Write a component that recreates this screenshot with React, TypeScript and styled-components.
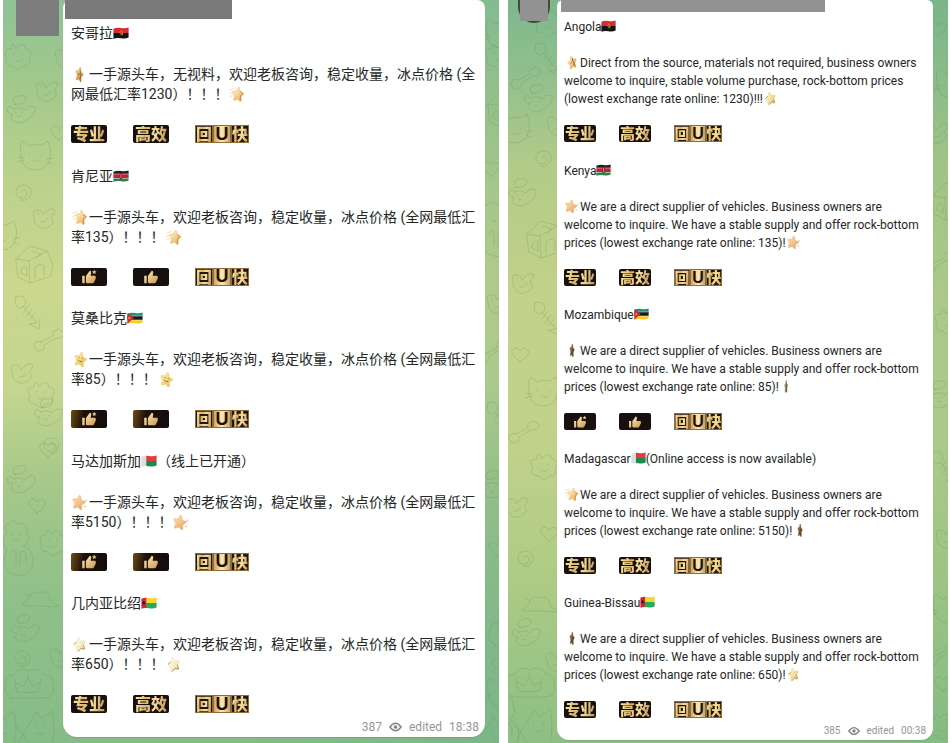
import React, { useId } from "react";
import styled, { createGlobalStyle, css } from "styled-components";

type Size = "large" | "small";

const GlobalStyle = createGlobalStyle`
  *, *::before, *::after { box-sizing: border-box; }
  body {
    margin: 0;
    background: #fff;
    color: #262626;
    font-family: Roboto, "Noto Sans CJK SC", sans-serif;
    text-spacing-trim: space-all;
  }
`;

const Page = styled.main`
  display: grid;
  grid-template-columns: 496fr 440fr;
  gap: 9px;
  min-height: 100vh;
  padding: 0 2px 0 3px;
`;

const Panel = styled.section<{ $size: Size }>`
  display: grid;
  min-width: 0;
  ${(p) =>
    p.$size === "large"
      ? css`
          grid-template-columns: 60px minmax(0, 1fr) 14px;
          background:
            linear-gradient(90deg, transparent 50%, rgba(98, 168, 134, 0.28)),
            linear-gradient(#8fc295 0%, #a3c98c 12%, #bcd28c 25%, #cbd78d 38%, #c5d68f 52%, #a8c98a 64%, #92c18a 78%, #86bb87 100%);
        `
      : css`
          grid-template-columns: 49px minmax(0, 1fr) 15px;
          background:
            linear-gradient(90deg, transparent 50%, rgba(110, 178, 128, 0.28)),
            linear-gradient(#7db78c 0%, #96c18c 12%, #b2cb89 22%, #c2d288 40%, #c0d28a 60%, #aecb85 78%, #98c385 92%, #8dbf84 100%);
        `}
`;

const Gutter = styled.div`
  position: relative;
  overflow: hidden;
`;

const Doodles = styled.svg`
  position: absolute;
  inset: 0;
  fill: none;
  stroke: #5d8b4c;
  stroke-opacity: 0.24;
  stroke-linecap: round;
  stroke-linejoin: round;
`;

const Avatar = styled.div<{ $size: Size }>`
  position: relative;
  margin-left: auto;
  ${(p) =>
    p.$size === "large"
      ? css`
          width: 43px;
          height: 36px;
          margin-right: 4px;
          background: #7c7c7c;
        `
      : css`
          width: 32px;
          height: 23px;
          margin-right: 7px;
          background: #454a3e;
          border-radius: 0 0 16px 16px;
          &::after {
            content: "";
            display: block;
            width: 28px;
            height: 21px;
            margin: 0 auto;
            background: #929292;
          }
        `}
`;

const Bubble = styled.article<{ $size: Size }>`
  display: flex;
  flex-direction: column;
  background: #fff;
  box-shadow: 0 1px 1px rgba(70, 110, 60, 0.2);
  ${(p) =>
    p.$size === "large"
      ? css`
          border-radius: 8px 8px 14px 14px;
          margin-bottom: 6px;
          padding: 0 6px 3px 8px;
        `
      : css`
          border-radius: 6px 6px 12px 12px;
          margin-bottom: 3px;
          padding: 0 7px 2px 7px;
        `}
`;

const NameBar = styled.div<{ $size: Size }>`
  ${(p) =>
    p.$size === "large"
      ? css`
          width: 41%;
          height: 19px;
          margin: 0 0 4px -6px;
          background: #7a7a7a;
        `
      : css`
          width: 73%;
          height: 12px;
          margin: 0 0 6px -3px;
          background: #929292;
        `}
`;

const Entries = styled.div<{ $size: Size }>`
  flex: 1;
  display: flex;
  flex-direction: column;
  justify-content: space-between;
  gap: 20px;
  padding-bottom: ${(p) => (p.$size === "large" ? "7px" : "6px")};
  font-size: ${(p) => (p.$size === "large" ? "14px" : "12px")};
  line-height: ${(p) => (p.$size === "large" ? "20px" : "18px")};
`;

const Country = styled.h2`
  margin: 0;
  font-size: inherit;
  font-weight: 400;
  white-space: nowrap;
`;

const Pitch = styled.p<{ $size: Size }>`
  margin: ${(p) => (p.$size === "large" ? "21px 0" : "18px 0 17px")};
`;

const FlagIcon = styled.svg<{ $size: Size }>`
  width: ${(p) => (p.$size === "large" ? "16px" : "15px")};
  height: 12px;
  vertical-align: -1px;
`;

const StarIcon = styled.svg<{ $size: Size }>`
  width: ${(p) => (p.$size === "large" ? "18px" : "16px")};
  height: 16px;
  vertical-align: -3px;
`;

const TagRow = styled.div<{ $size: Size }>`
  display: flex;
  gap: ${(p) => (p.$size === "large" ? "26px" : "23px")};
  height: ${(p) => (p.$size === "large" ? "18px" : "17px")};
`;

const Tag = styled.span<{ $glow?: boolean; $size: Size }>`
  display: flex;
  align-items: center;
  justify-content: center;
  width: ${(p) => (p.$size === "large" ? "36px" : "32px")};
  height: 100%;
  border-radius: 2px;
  background: ${(p) =>
    p.$glow ? "linear-gradient(100deg, #6e4c14, #1d110c 35%, #120c0c)" : "#17100e"};
`;

const GoldText = styled.span<{ $size: Size }>`
  padding-bottom: 2px;
  font-family: "Noto Sans CJK SC", sans-serif;
  font-weight: 900;
  font-size: ${(p) => (p.$size === "large" ? "16px" : "15px")};
  line-height: ${(p) => (p.$size === "large" ? "16px" : "15px")};
  color: transparent;
  background: linear-gradient(100deg, #fff0b4, #d9b46b 35%, #f7dfa0 60%, #b98d4c);
  background-clip: text;
`;

const WideTag = styled.span`
  display: flex;
  height: 100%;
`;

const Tile = styled.span<{ $inverse?: boolean; $size: Size }>`
  display: flex;
  align-items: center;
  justify-content: center;
  width: ${(p) => (p.$size === "large" ? "18px" : "16px")};
  box-shadow: inset 0 0 0 1px #8e6c3a;
  background: ${(p) =>
    p.$inverse ? "linear-gradient(90deg, #c99d5a, #ffe9ae 50%, #c4995c)" : "#241711"};
  color: #1d120b;
  font-family: "Liberation Sans", sans-serif;
  font-weight: 700;
  font-size: ${(p) => (p.$size === "large" ? "18px" : "16px")};
  line-height: 17px;
`;

const Footer = styled.footer<{ $size: Size }>`
  display: flex;
  align-items: center;
  justify-content: flex-end;
  gap: 7px;
  color: #969696;
  font-size: ${(p) => (p.$size === "large" ? "12px" : "10px")};
  line-height: 14px;
`;

type CountryCode = "angola" | "kenya" | "mozambique" | "madagascar" | "guinea";

const flagArt: Record<CountryCode, React.ReactNode> = {
  angola: (
    <>
      <path fill="#d92b31" d="M0 0h16v6H0z" />
      <path fill="#151313" d="M0 6h16v6H0z" />
      <path d="M7.500 4a2 2 0 1 1 .2 4M6.500 5.500l3.500 2.500" fill="none" stroke="#e0a52d" strokeWidth=".8" />
    </>
  ),
  kenya: (
    <>
      <path fill="#211f20" d="M0 0h16v4H0z" />
      <path fill="#f3eeee" d="M0 3.7h16v5H0z" />
      <path fill="#c92035" d="M0 4.3h16v3.6H0z" />
      <path fill="#28824b" d="M0 8.5h16V12H0z" />
      <ellipse cx="8" cy="6" rx="1.5" ry="3.3" fill="#8d2028" />
      <path d="M8 4v4" stroke="#fff" strokeWidth=".5" />
    </>
  ),
  mozambique: (
    <>
      <path fill="#16937a" d="M0 0h16v4.4H0z" />
      <path fill="#1b1919" d="M0 4h16v4H0z" />
      <path fill="#f4cc26" d="M0 8h16v4H0z" />
      <path stroke="#fff" strokeWidth=".5" d="M0 4h16M0 8h16" />
      <path fill="#cf2939" d="m0 0 7 6-7 6z" />
      <path fill="#e5a637" d="m2.3 4.500.5 1h1l-.8.8.4 1.200-1.100-.7-1 .7.3-1.200-.8-.8h1z" />
    </>
  ),
  madagascar: (
    <>
      <path fill="#dedede" d="M0 0h6v12H0z" />
      <path fill="#e63a3b" d="M5.3 0H16v6H5.3z" />
      <path fill="#198b4e" d="M5.3 6H16v6H5.3z" />
    </>
  ),
  guinea: (
    <>
      <path fill="#d5243a" d="M0 0h6v12H0z" />
      <path fill="#f5d72f" d="M5.3 0H16v6H5.3z" />
      <path fill="#26aa57" d="M5.3 6H16v6H5.3z" />
      <path fill="#221718" d="m2.8 3.6.6 1.6H5L3.7 6.3l.5 1.7-1.4-1-1.4 1 .5-1.7L.6 5.2h1.6z" />
    </>
  ),
};

function Flag({ country, size }: { country: CountryCode; size: Size }) {
  const id = useId();
  return (
    <FlagIcon $size={size} viewBox="0 0 16 12" preserveAspectRatio="none" aria-hidden="true">
      <clipPath id={id}>
        <path d="M.4 1.800Q4 .2 8 1t7.600-.5V10.600Q12 12 8 11.200T.4 11.700z" />
      </clipPath>
      <g clipPath={`url(#${id})`}>{flagArt[country]}</g>
    </FlagIcon>
  );
}

type StarKind =
  | "side" | "trail" | "smile" | "peach" | "pale" | "tilt" | "edge" | "sliver" | "sparkle";

const starBody =
  "M9 1.200c.7 0 1 .7 1.300 1.500L11.400 5.500l3.600.4c1.300.2 1.500 1.200.6 2L13 10.200l.8 3.500c.3 1.300-.6 1.900-1.700 1.200L9 13.100l-3.100 1.800c-1.100.7-2 .1-1.700-1.200L5 10.200 2.400 7.900c-.9-.8-.7-1.800.6-2l3.600-.4 1.100-2.800C8 1.900 8.300 1.200 9 1.200z";

interface StarLook {
  light: string;
  dark: string;
  transform: string;
  face?: boolean;
  trail?: boolean;
  outline?: boolean;
  speckle?: boolean;
  streak?: boolean;
}

const starLooks: Record<StarKind, StarLook> = {
  side: { light: "#ffdf92", dark: "#b8752d", transform: "translate(4 0) scale(.5 1) rotate(14 9 8)", speckle: true },
  trail: { light: "#fff3cc", dark: "#e5ac58", transform: "translate(3 0) scale(.78 1) rotate(8 9 8)", trail: true },
  smile: { light: "#ffeaa0", dark: "#e9bf5c", transform: "translate(2 0) scale(.84 1) rotate(14 9 8)", face: true },
  peach: { light: "#ffdda2", dark: "#e5a970", transform: "translate(0 0) scale(.86 1) rotate(12 9 8)", streak: true },
  pale: { light: "#fffdf2", dark: "#f0dfa6", transform: "translate(1 0) scale(.84 1) rotate(-12 9 8)", outline: true },
  tilt: { light: "#fff0b8", dark: "#d6a250", transform: "translate(3 0) scale(.68 1) rotate(-16 9 8)", speckle: true },
  edge: { light: "#a88450", dark: "#3a2a1c", transform: "translate(6 0) scale(.34 1) rotate(6 9 8)", speckle: true },
  sliver: { light: "#d9c8a2", dark: "#463b31", transform: "translate(6 0) scale(.22 1)", speckle: true },
  sparkle: { light: "#fff8d6", dark: "#e8c674", transform: "translate(1 0) scale(.8 1) rotate(-12 9 8)", outline: true },
};

function Star({ kind, size }: { kind: StarKind; size: Size }) {
  const id = useId();
  const look = starLooks[kind];
  return (
    <StarIcon $size={size} viewBox="0 0 18 16" aria-hidden="true">
      <linearGradient id={id} x1="0" y1="0" x2="1" y2="1">
        <stop offset=".15" stopColor={look.light} />
        <stop offset=".9" stopColor={look.dark} />
      </linearGradient>
      {look.trail && (
        <path d="M1.500 4.500Q4 2.500 7 2.500M1 8l4-2M2 11l3-2" stroke="#f9e6bb" strokeWidth="1.200" fill="none" />
      )}
      {look.streak && (
        <path d="M13 8q2 0 3-2.500M13 12l2 1" stroke="#dfae6e" strokeWidth=".9" fill="none" />
      )}
      <g transform={look.transform}>
        <path d={starBody} fill={`url(#${id})`} stroke={look.dark} strokeWidth=".5" />
        {look.outline && (
          <path d="m13 9.500 1 4.500-4-1.500-4 2.500M6 5.500 2.500 7" stroke="#b0924c" strokeWidth=".9" fill="none" />
        )}
        {look.trail && (
          <path d="m11.500 5 3.500 1.500-2.500 3 1 4.500" stroke="#bd8439" strokeWidth=".9" fill="none" />
        )}
        {look.face && (
          <path d="M7 6.500v1M11 6.500v1M6.500 9.500q2.500 2.500 5 0" stroke="#8b6733" strokeWidth=".9" fill="none" />
        )}
        {look.speckle && (
          <path d="m11 4-1 3 2 2-1 4M6 9l3-1" stroke="#7a4f24" strokeWidth="1" fill="none" />
        )}
      </g>
    </StarIcon>
  );
}

function Thumb({ star, size }: { star?: boolean; size: Size }) {
  const id = useId();
  const side = size === "large" ? 16 : 14;
  return (
    <svg width={side} height={side} viewBox="0 0 26 26" aria-hidden="true">
      <linearGradient id={id} x1="0" y1="0" x2="1" y2="1">
        <stop stopColor="#fff0bd" />
        <stop offset="1" stopColor="#cf9a51" />
      </linearGradient>
      <path
        fill={`url(#${id})`}
        d="M2 23h4V11H2v12zm22-10c0-1.100-.9-2-2-2h-6.300l.9-4.600c.3-1.900-.8-3.400-2.400-3.400L8.600 10.600C8.200 11 8 11.400 8 12v9c0 1.100.9 2 2 2h9c.8 0 1.500-.5 1.800-1.200l3-6c.1-.3.2-.5.2-.8z"
      />
      {star && <path fill="#e8c27d" d="m21.500 1 1.100 2.500 2.700.3-2 1.800.6 2.700-2.400-1.400-2.400 1.400.6-2.700-2-1.800 2.700-.3z" />}
    </svg>
  );
}

type TagKind = "words" | "thumbs" | "glow";

function Tags({ kind, size }: { kind: TagKind; size: Size }) {
  const glow = kind === "glow";
  return (
    <TagRow $size={size}>
      <Tag $size={size} $glow={glow}>
        {kind === "words" ? <GoldText $size={size}>专业</GoldText> : <Thumb star size={size} />}
      </Tag>
      <Tag $size={size} $glow={glow}>
        {kind === "words" ? <GoldText $size={size}>高效</GoldText> : <Thumb size={size} />}
      </Tag>
      <WideTag>
        <Tile $size={size}><GoldText $size={size}>回</GoldText></Tile>
        <Tile $size={size} $inverse>U</Tile>
        <Tile $size={size}><GoldText $size={size}>快</GoldText></Tile>
      </WideTag>
    </TagRow>
  );
}

interface EntryData {
  name: string;
  note?: string;
  country: CountryCode;
  text: string;
  lead: StarKind;
  tail: StarKind;
  tags: TagKind;
}

const chinese: EntryData[] = [
  { name: "安哥拉", country: "angola", text: "一手源头车，无视料，欢迎老板咨询，稳定收量，冰点价格 (全网最低汇率1230）！！！", lead: "side", tail: "trail", tags: "words" },
  { name: "肯尼亚", country: "kenya", text: "一手源头车，欢迎老板咨询，稳定收量，冰点价格 (全网最低汇率135）！！！", lead: "trail", tail: "trail", tags: "thumbs" },
  { name: "莫桑比克", country: "mozambique", text: "一手源头车，欢迎老板咨询，稳定收量，冰点价格 (全网最低汇率85）！！！", lead: "smile", tail: "smile", tags: "glow" },
  { name: "马达加斯加", note: "（线上已开通）", country: "madagascar", text: "一手源头车，欢迎老板咨询，稳定收量，冰点价格 (全网最低汇率5150）！！！", lead: "peach", tail: "peach", tags: "glow" },
  { name: "几内亚比绍", country: "guinea", text: "一手源头车，欢迎老板咨询，稳定收量，冰点价格 (全网最低汇率650）！！！", lead: "pale", tail: "pale", tags: "words" },
];

const supplier = (rate: string) =>
  `We are a direct supplier of vehicles. Business owners are welcome to inquire. We have a stable supply and offer rock-bottom prices (lowest exchange rate online: ${rate})!`;

const english: EntryData[] = [
  { name: "Angola", country: "angola", text: "Direct from the source, materials not required, business owners welcome to inquire, stable volume purchase, rock-bottom prices (lowest exchange rate online: 1230)!!!", lead: "tilt", tail: "sparkle", tags: "words" },
  { name: "Kenya", country: "kenya", text: supplier("135"), lead: "peach", tail: "peach", tags: "words" },
  { name: "Mozambique", country: "mozambique", text: supplier("85"), lead: "edge", tail: "sliver", tags: "thumbs" },
  { name: "Madagascar", note: "(Online access is now available)", country: "madagascar", text: supplier("5150"), lead: "trail", tail: "edge", tags: "words" },
  { name: "Guinea-Bissau", country: "guinea", text: supplier("650"), lead: "edge", tail: "sparkle", tags: "words" },
];

function Entry({ data, size }: { data: EntryData; size: Size }) {
  return (
    <section>
      <Country>
        {data.name}
        <Flag country={data.country} size={size} />
        {data.note}
      </Country>
      <Pitch $size={size}>
        <Star kind={data.lead} size={size} />
        {data.text}
        <Star kind={data.tail} size={size} />
      </Pitch>
      <Tags kind={data.tags} size={size} />
    </section>
  );
}

function DoodleShapes() {
  return (
    <defs>
      <g id="cat">
        <path d="M3 16Q1 8 5 4l6 5q6-3 12-1l7-4q4 9 2 17-3 12-15 12T3 20z" />
        <path d="M11 17v1M24 18v1M15 23q2 2 3 0 2 3 4 0M0 20l6 1M0 25l6-2M29 22l6-1M29 25l5 2" />
      </g>
      <g id="house">
        <path d="m1 16 14-13 17 5 6 14-2 11-21 7-12-6zM1 16l13 2 18-10M14 18l1 22M20 35V24q5-5 9-1v9M7 25q4-5 5 3v5l-6-3zM17 8l9 3-5 4" />
      </g>
      <g id="bone">
        <path d="M8 14 20 8q-1-6 3-5 2-4 5 0 5 1 2 5-3 3-7 2L11 17q1 6-3 5-4 3-5-1-4-3-1-6 3-3 6-1z" />
      </g>
      <g id="fish">
        <path d="M3 3q-3 9 4 11Q15 12 12 5 8 0 3 3zM10 12l14 17-8 1 10 5 1-10M16 11l-6 8M19 15l-6 8M22 19l-6 7" />
      </g>
      <g id="bird">
        <path d="M2 12Q-1 4 6 5q4 0 5 5 7-9 12-5-1 5-4 7 5 5-1 9-9 6-15-3zM6 8v1M9 17q5 1 7-4" />
      </g>
      <g id="angel">
        <path d="M8 10q-5-7 3-9 11-2 7 5-3 4-10 3zM7 14Q1 8 0 16q2 3 6 3-4 4 0 7 7 4 14-1 9-5 8-13-6-3-10 3-5-4-11-1zM9 17v1M15 17v1M10 21q2 2 4 0" />
      </g>
      <g id="spiral">
        <path d="M8 8q1-4 4-1 3 5-3 7-8 0-7-7 1-6 8-6 8 1 7 9-3 8-10 6" />
      </g>
      <g id="heart">
        <path d="M10 16Q-2 7 3 3q4-3 7 2 4-5 8-1 3 5-8 12z" />
      </g>
      <g id="mouse">
        <path d="M1 16q5-2 7-8 3-6 9-3 9-5 12 9l8 4q-8 2-15 0H5q-5 1-4-2M12 9v1M8 8l-5-3" />
      </g>
      <g id="bear">
        <path d="M4 14Q-1 5 6 5q4-6 9 0 10-2 9 8 5 10-4 14 13 4 9 22-7 12-22 5-10-8-3-23-8-8 0-17zM9 15v1M17 15v1M10 20q3 3 6 0M7 35q4-8 6 0v11M17 46V34q5-5 6 2v8" />
      </g>
      <g id="cloud">
        <path d="M7 30q-9-4-5-12-2-10 8-10 5-9 15-4 9-5 16 4 11 1 8 11 3 12-10 12H7zM13 25l-2-10 8 5 5-9 5 9 8-5-3 10zM11 14v-2M24 10V7M37 14v-2" />
      </g>
      <g id="dragon">
        <path d="M0 39q5-13 12-22l5-9 6 7 10-8q4 18 0 33M16 20v2M26 20v2M17 29q5 3 9-1M-5 20l10 12 5 9" />
      </g>
      <g id="flower">
        <path d="M12 8q8-8 10 1 9 2 3 9 3 9-6 8-5 7-10 0-10 0-6-8-6-9 4-9 0-9 5-1zM10 13v1M18 14v1M11 20q4 3 7-1" />
      </g>
    </defs>
  );
}

type Doodle = [shape: string, x: number, y: number];

const largeLeft: Doodle[] = [
  ["flower", 1, 40], ["bird", 51, 45], ["bird", 32, 78], ["angel", 4, 95], ["heart", 46, 124],
  ["cat", 15, 137], ["spiral", 11, 184], ["bird", 29, 205], ["cat", -19, 217], ["house", 12, 243],
  ["fish", 10, 294], ["bone", 30, 328], ["bird", 7, 360], ["flower", 24, 378], ["angel", 31, 398],
  ["spiral", 39, 437], ["heart", 35, 441], ["angel", 4, 465], ["heart", 24, 497], ["bear", 0, 519],
  ["flower", 36, 526], ["mouse", 19, 588], ["angel", 8, 614], ["spiral", 10, 650], ["bird", 46, 644],
  ["cloud", 1, 667], ["dragon", 16, 704], ["dragon", -22, 704],
];

const largeRight: Doodle[] = [
  ["cat", -1, 15], ["flower", 0, 40], ["house", 2, 88], ["heart", -4, 160], ["bear", -4, 200],
  ["bird", 1, 290], ["bone", -8, 340], ["fish", 0, 400], ["angel", -5, 470], ["heart", 2, 540],
  ["cloud", 3, 615], ["bone", 6, 645], ["cat", 0, 674], ["dragon", -9, 709],
];

const smallLeft: Doodle[] = [
  ["flower", 26, 7], ["fish", 25, 41], ["bone", 2, 66], ["angel", 16, 84], ["cat", -11, 110],
  ["bird", 38, 112], ["spiral", 26, 150], ["angel", 0, 178], ["house", 18, 218], ["bird", 3, 270],
  ["fish", 24, 300], ["heart", 2, 346], ["cat", 18, 373], ["bone", 0, 420], ["flower", 22, 450],
  ["bird", -3, 494], ["heart", 31, 525], ["spiral", 8, 550], ["mouse", 14, 593], ["angel", 4, 618],
  ["bird", 37, 648], ["cloud", -3, 666], ["dragon", 9, 702], ["bear", -19, 692],
];

const smallRight: Doodle[] = [
  ["heart", -5, 20], ["cat", 1, 65], ["bird", -8, 120], ["house", -2, 180], ["bone", -9, 250],
  ["flower", 1, 305], ["angel", -6, 380], ["fish", -3, 450], ["bird", 2, 525], ["cat", -2, 590],
  ["bone", -8, 643], ["heart", 0, 675], ["flower", -5, 710],
];

function Wallpaper({ items }: { items: Doodle[] }) {
  return (
    <Doodles width="100%" height="100%" aria-hidden="true">
      {items.map(([shape, x, y]) => (
        <use key={`${shape}-${x}-${y}`} href={`#${shape}`} x={x} y={y} />
      ))}
    </Doodles>
  );
}

function Eye({ size }: { size: Size }) {
  return (
    <svg width={size === "large" ? 13 : 12} height="10" viewBox="0 0 14 10" role="img" aria-label="views">
      <path d="M1 5q6-8 12 0-6 8-12 0z" fill="none" stroke="#858585" strokeWidth="1.600" />
      <circle cx="7" cy="5" r="2" fill="#858585" />
    </svg>
  );
}

interface ChatProps {
  size: Size;
  lang: string;
  entries: EntryData[];
  views: number;
  time: string;
  left: Doodle[];
  right: Doodle[];
}

function Chat({ size, lang, entries, views, time, left, right }: ChatProps) {
  return (
    <Panel $size={size} lang={lang}>
      <Gutter>
        <Wallpaper items={left} />
        <Avatar $size={size} />
      </Gutter>
      <Bubble $size={size}>
        <NameBar $size={size} />
        <Entries $size={size}>
          {entries.map((data) => (
            <Entry key={data.name} data={data} size={size} />
          ))}
        </Entries>
        <Footer $size={size}>
          <span>{views}</span>
          <Eye size={size} />
          <span>edited</span>
          <time>{time}</time>
        </Footer>
      </Bubble>
      <Gutter>
        <Wallpaper items={right} />
      </Gutter>
    </Panel>
  );
}

export default function App() {
  return (
    <>
      <GlobalStyle />
      <svg width="0" height="0" display="none" aria-hidden="true">
        <DoodleShapes />
      </svg>
      <Page>
        <Chat size="large" lang="zh-CN" entries={chinese} views={387} time="18:38" left={largeLeft} right={largeRight} />
        <Chat size="small" lang="en" entries={english} views={385} time="00:38" left={smallLeft} right={smallRight} />
      </Page>
    </>
  );
}
